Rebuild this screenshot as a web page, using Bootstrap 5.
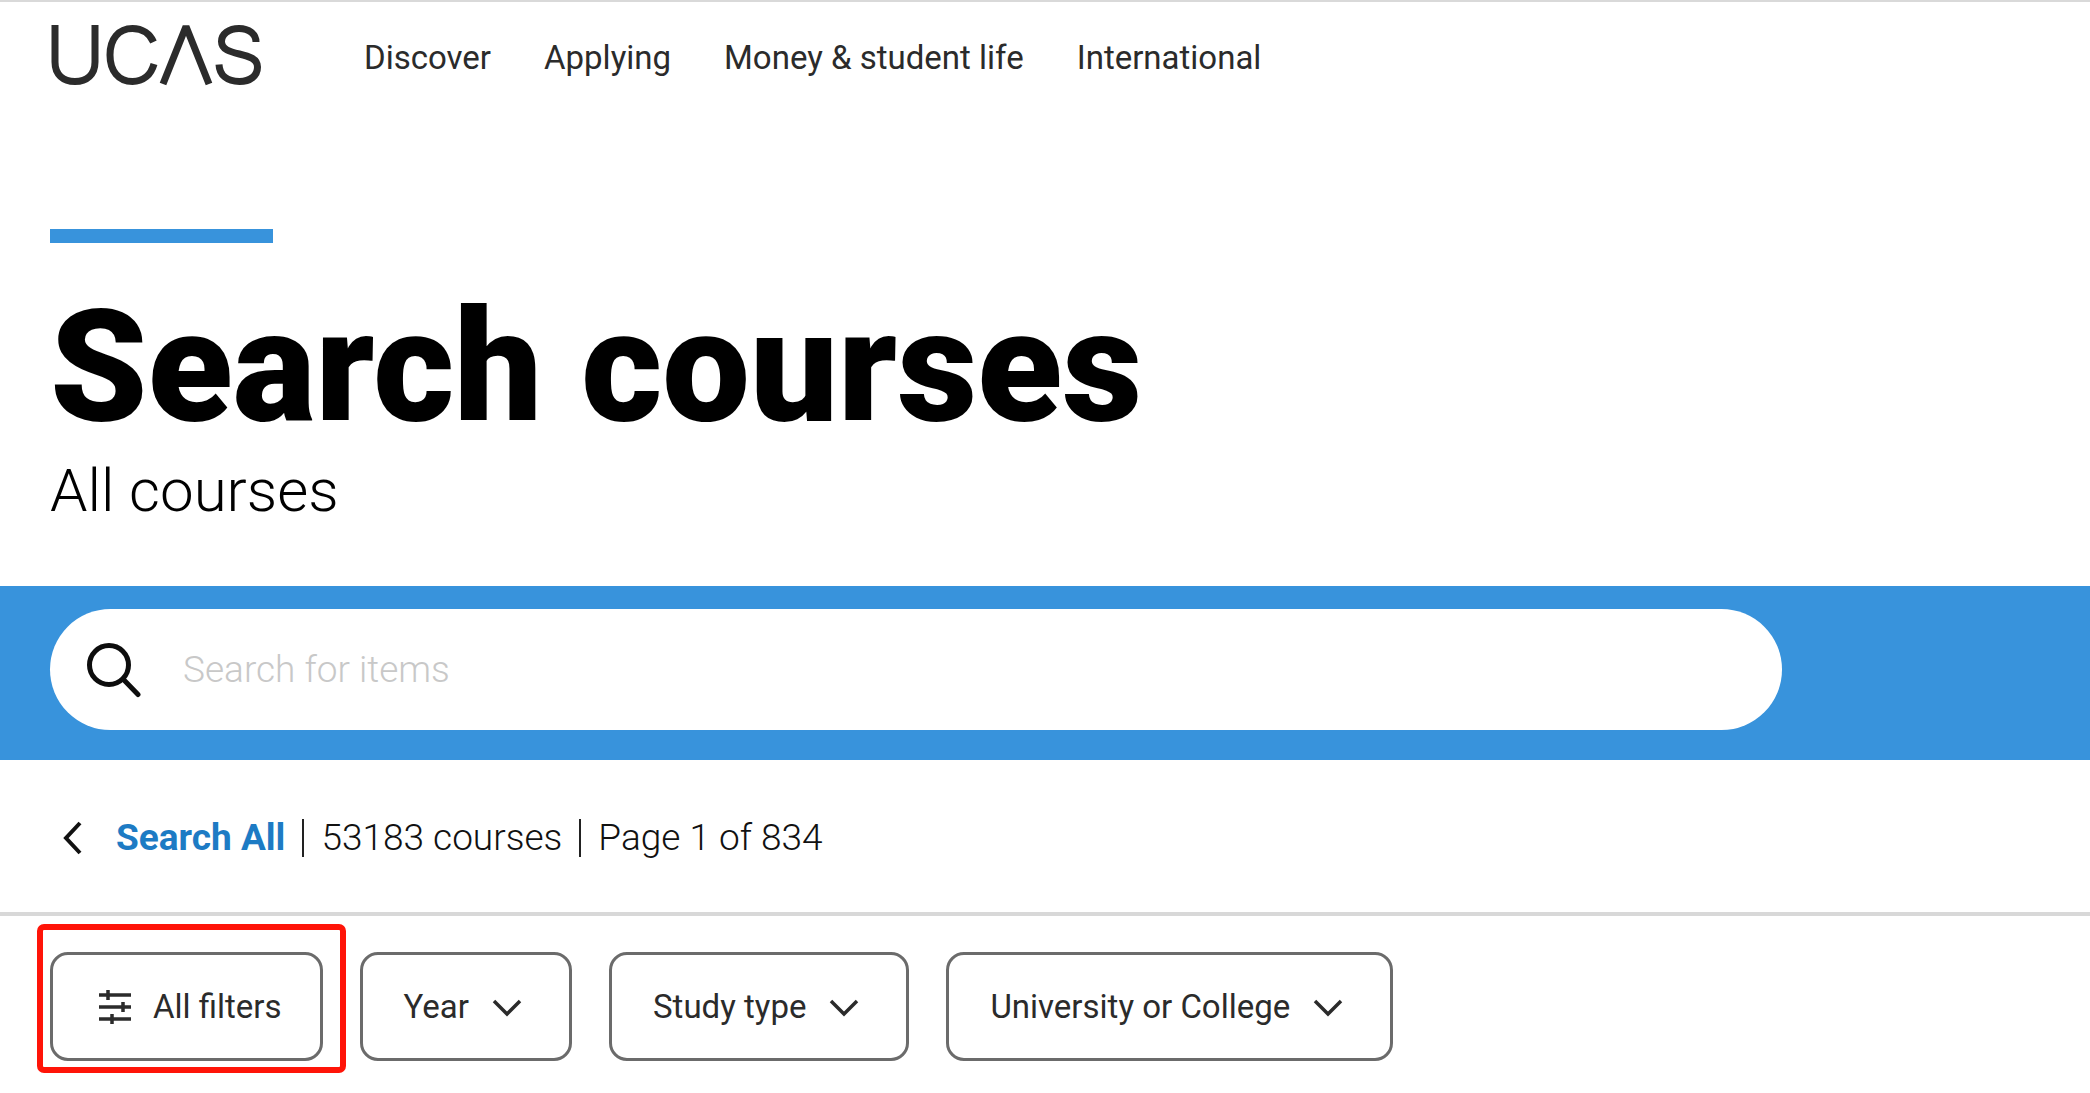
<!DOCTYPE html>
<html lang="en">
<head>
<meta charset="utf-8">
<meta name="viewport" content="width=device-width, initial-scale=1">
<title>Search courses | UCAS</title>
<link rel="stylesheet" href="https://cdn.jsdelivr.net/npm/bootstrap@5.3.0/dist/css/bootstrap.min.css">
<style>
  :root { --ucas-blue: #3893dc; --ucas-link: #1d7bc4; --ucas-ink: #2b2b2b; --gutter: 50px; }
  body { font-family: Roboto, "Liberation Sans", sans-serif; color: #000; background: #fff; }
  .page-x { padding-left: var(--gutter); padding-right: var(--gutter); }
  .site-header { border-top: 2px solid #d9d9d9; min-height: 114px; }
  .site-logo { margin-right: 102px; }
  .site-nav { gap: 16px 53px; font-size: 33px; line-height: 40px; }
  .site-nav .nav-link { color: var(--ucas-ink); padding: 0; }
  .title-accent { width: 223px; height: 14px; background: var(--ucas-blue); }
  .title-block { padding-top: 115px; padding-bottom: 59px; }
  .page-title { font-size: 156px; line-height: 176px; font-weight: 900; margin: 36px 0 0; }
  .page-subtitle { font-size: 60px; line-height: 72px; font-weight: 300; }
  .search-band { background: var(--ucas-blue); padding-top: 23px; padding-bottom: 30px; }
  .search-pill { height: 121px; max-width: 1732px; padding-left: 36px; padding-right: 60px; gap: 41px; }
  .search-pill .form-control { font-size: 37px; line-height: 48px; font-weight: 300; padding: 0; }
  .search-pill .form-control::placeholder { color: #c8c8c8; opacity: 1; }
  .result-bar { padding: 56px 0 52px; border-bottom: 4px solid #d8d8d8; font-size: 37px; line-height: 44px; font-weight: 300; color: #111; }
  .result-back { color: #111; margin: 0 32px 0 12px; }
  .result-all { font-weight: 700; color: var(--ucas-link); }
  .result-sep { width: 2px; height: 38px; background: #222; margin: 0 17px; }
  .filter-bar { padding-top: 36px; padding-bottom: 32px; gap: 37px; }
  .filter-btn { --bs-btn-color: var(--ucas-ink); --bs-btn-border-color: #6b6b6b; --bs-btn-border-width: 3px; --bs-btn-border-radius: 18px;
    --bs-btn-font-size: 33px; --bs-btn-line-height: 40px; --bs-btn-padding-x: 41px; --bs-btn-padding-y: 31px;
    --bs-btn-hover-bg: #f3f3f3; --bs-btn-hover-border-color: #444; height: 109px; gap: 23px; padding-right: 47px; }
  .filter-btn.filter-main { padding: 0 38px 0 46px; gap: 22px; }
  .highlight-box { inset: -28px -23px -12px -13px; border: 6px solid #ff1408; border-radius: 7px; pointer-events: none; }
</style>
</head>
<body>
<header class="site-header page-x d-flex align-items-center flex-wrap">
  <a class="site-logo d-flex" href="#" aria-label="UCAS home">
    <svg width="212" height="66" viewBox="0 0 212 66" fill="none" stroke="#2b2b2b" stroke-width="7" aria-hidden="true">
      <path d="M5 0V37C5 49.500 13 56.500 25 56.500S45 49.500 45 37V0"/>
      <path d="M103.500 17C100 9 92.500 3.500 82.500 3.500C68.500 3.500 60 14 60 30S68.500 56.500 82.500 56.500C93 56.500 101 50 104 39"/>
      <path d="M113 59L136 1.500L159 59" stroke-linejoin="bevel"/>
      <path d="M206 17C206 9 199 3.500 189 3.500S171.500 9 171.500 16.500C171.500 33 207.500 25 207.500 42C207.500 51 200 56.500 189.500 56.500C177 56.500 169.500 50 169 39.500"/>
    </svg>
  </a>
  <nav aria-label="Main">
    <ul class="site-nav nav">
      <li class="nav-item"><a class="nav-link" href="#">Discover</a></li>
      <li class="nav-item"><a class="nav-link" href="#">Applying</a></li>
      <li class="nav-item"><a class="nav-link" href="#">Money &amp; student life</a></li>
      <li class="nav-item"><a class="nav-link" href="#">International</a></li>
    </ul>
  </nav>
</header>

<main>
  <section class="title-block page-x">
    <div class="title-accent"></div>
    <h1 class="page-title">Search courses</h1>
    <p class="page-subtitle mb-0">All courses</p>
  </section>

  <form class="search-band page-x" role="search">
    <div class="search-pill d-flex align-items-center bg-white rounded-pill">
      <label for="course-search" class="d-flex" aria-label="Search for items">
        <svg width="56" height="56" viewBox="0 0 56 56" fill="none" stroke="#0d0d0d" stroke-width="5" stroke-linecap="round" aria-hidden="true">
          <circle cx="23" cy="23" r="19.500"/><path d="M37 37L52 52.500"/>
        </svg>
      </label>
      <input id="course-search" type="search" class="form-control border-0 shadow-none bg-transparent" placeholder="Search for items">
    </div>
  </form>

  <section class="result-bar">
    <div class="page-x d-flex align-items-center flex-wrap">
      <a class="result-back d-flex" href="#" aria-label="Back">
        <svg width="22" height="36" viewBox="0 0 22 36" fill="none" stroke="currentColor" stroke-width="4" aria-hidden="true"><path d="M18 3L4 18L18 33"/></svg>
      </a>
      <a class="result-all text-decoration-none" href="#">Search All</a>
      <span class="result-sep"></span>
      <span>53183 courses</span>
      <span class="result-sep"></span>
      <span>Page 1 of 834</span>
    </div>
  </section>

  <section class="filter-bar page-x d-flex flex-wrap" aria-label="Filters">
    <div class="position-relative">
      <button type="button" class="btn filter-btn filter-main d-flex align-items-center">
        <svg width="32" height="36" viewBox="0 0 32 36" fill="none" stroke="#2b2b2b" stroke-width="3.500" aria-hidden="true">
          <path d="M0 6H32M0 18H32M0 30H32M9 1V11M24 13V23M13 25V35"/>
        </svg>
        <span>All filters</span>
      </button>
      <div class="highlight-box position-absolute"></div>
    </div>
    <button type="button" class="btn filter-btn d-flex align-items-center" aria-expanded="false">
      <span>Year</span>
      <svg width="30" height="20" viewBox="0 0 30 20" fill="none" stroke="#2b2b2b" stroke-width="3.500" aria-hidden="true"><path d="M2 4L15 17L28 4"/></svg>
    </button>
    <button type="button" class="btn filter-btn d-flex align-items-center" aria-expanded="false">
      <span>Study type</span>
      <svg width="30" height="20" viewBox="0 0 30 20" fill="none" stroke="#2b2b2b" stroke-width="3.500" aria-hidden="true"><path d="M2 4L15 17L28 4"/></svg>
    </button>
    <button type="button" class="btn filter-btn d-flex align-items-center" aria-expanded="false">
      <span>University or College</span>
      <svg width="30" height="20" viewBox="0 0 30 20" fill="none" stroke="#2b2b2b" stroke-width="3.500" aria-hidden="true"><path d="M2 4L15 17L28 4"/></svg>
    </button>
  </section>
</main>
<script src="https://cdn.jsdelivr.net/npm/bootstrap@5.3.0/dist/js/bootstrap.bundle.min.js"></script>
</body>
</html>
